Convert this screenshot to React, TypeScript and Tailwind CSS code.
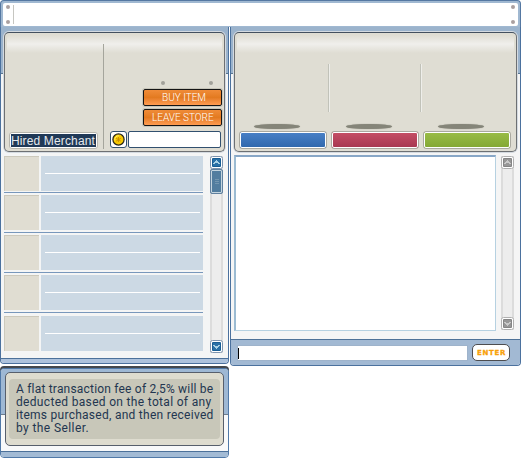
import React from 'react';

const rows = [
  { box: 'h-[35px] mt-0', line: 'mt-[17px]' },
  { box: 'h-[35px] mt-[2px]', line: 'mt-[17px]' },
  { box: 'h-[35px] mt-[2px]', line: 'mt-[17px]' },
  { box: 'h-[35px] mt-[2px]', line: 'mt-[17px]' },
  { box: 'h-[35px] mt-[3px]', line: 'mt-[17px]' },
];
const gaps = ['h-[1px]', 'h-[2px]', 'h-[2px]', 'h-[2px]', 'h-0'];

function Arrow({ down, gray }: { down?: boolean; gray?: boolean }) {
  return (
    <svg width="13" height="13" viewBox="0 0 13 13" className="block shrink-0">
      <rect x=".5" y=".5" width="12" height="12" rx="2" fill="#fff" stroke={gray ? '#b0b0b0' : '#7d94af'} />
      <rect x="2" y="2" width="9" height="9" rx="1" fill={gray ? '#858585' : '#175d94'} />
      <rect x="3" y="3" width="7" height="7" fill={gray ? '#979797' : '#2a70a6'} />
      <path shapeRendering="crispEdges" d={down ? 'M3 5h2v1h3V5h2v1H9v1H8v1H7v1H6V8H5V7H4V6H3z' : 'M3 8h2V7h3v1h2V7H9V6H8V5H7V4H6v1H5v1H4v1H3z'} fill={gray ? '#c9c9c9' : '#a8d0e4'} />
    </svg>
  );
}

function Shade() {
  return <div className="absolute inset-x-[2px] top-[2px] h-[18px] rounded bg-gradient-to-b from-[#dfddd3] via-[#f0efec] to-[#dfddd3]" />;
}

function Coin() {
  return (
    <div className="flex h-[17px] w-[17px] items-center justify-center rounded-[3px] border border-[#31506f] bg-white">
      <svg width="13" height="13" viewBox="0 0 13 13">
        <circle cx="6.5" cy="6.5" r="5.6" fill="#f6c800" stroke="#292719" strokeWidth="1.3" />
        <path d="M2.8 7.5a3.8 3.8 0 0 1 4.2-4.7" stroke="#fff06a" fill="none" />
        <path d="M6.5 4v5M4.2 5.3l4.6 2.8M8.8 5.3L4.2 8.1" stroke="#c88c00" strokeWidth=".9" />
      </svg>
    </div>
  );
}

function OrangeButton({ children, pad }: { children: React.ReactNode; pad: string }) {
  return (
    <button className={`flex h-[17px] w-[79px] items-center whitespace-nowrap rounded-[2px] border border-[#151515] bg-gradient-to-b from-[#f08c38] via-[#e37a20] to-[#ff9c51] font-['Roboto',sans-serif] text-[10px] font-light leading-[15px] text-white shadow-[0_0_0_1px_#c7c5b9] ${pad}`}>
      {children}
    </button>
  );
}

function Avatar({ color }: { color: string }) {
  return (
    <div className="flex flex-col">
      <div className="ml-[15px] h-[5px] w-[46px] rounded-[50%] bg-[#858579] shadow-[0_0_1px_#858579]" />
      <div className={`mt-[2px] h-[18px] w-[88px] rounded-[3px] border border-[#aaa9a0] ${color}`}>
        <div className="h-full w-full rounded-[2px] border border-white" />
      </div>
    </div>
  );
}

export default function App() {
  return (
    <div className="h-[460px] w-[521px] overflow-hidden bg-white font-['Liberation_Sans',sans-serif]">
      <header className="flex h-[27px] w-[521px] rounded-t-[4px] border-x border-t border-[#5578a2] bg-[#a0b8d1] px-[2px] pb-[1px] pt-[2px]">
        <div className="flex h-[23px] w-full justify-between rounded-[2px] bg-white px-[3px] py-[2px]">
          <div className="flex gap-[3px]">
            <div className="flex flex-col justify-between">
              <i className="h-[4px] w-[4px] rounded-full bg-[#aaa0a0]" />
              <i className="h-[4px] w-[4px] rounded-full bg-[#aaa0a0]" />
            </div>
            <i className="h-[19px] w-px bg-[#c6c6c1]" />
          </div>
          <div className="flex flex-col justify-between">
            <i className="h-[4px] w-[4px] rounded-full bg-[#aaa0a0]" />
            <i className="h-[4px] w-[4px] rounded-full bg-[#aaa0a0]" />
          </div>
        </div>
      </header>

      <div className="flex h-[340px] gap-[1px]">
        <section className="h-[337px] w-[229px] overflow-hidden rounded-b-[4px] border-x border-b border-[#4b719e] bg-[#f4f5f5]">
          <div className="h-[47px] border-b border-[#597590] bg-[#9bb3cc] px-[3px] pt-[5px]">
            <div className="relative flex h-[120px] w-[221px] rounded-[5px] border border-[#6d7073] border-t-[#43505f] bg-[#dfddd3] shadow-[0_0_0_1px_#d4dae0]">
              <Shade />
              <div className="relative mt-[11px] h-[105px] w-[99px] border-r border-[#a5a59c]">
                <div className="ml-[4px] mt-[88px] h-[17px] w-[89px] rounded-[3px] border border-[#b6b5ad] bg-white p-px">
                  <div className="h-[13px] overflow-hidden whitespace-nowrap bg-[#203957] text-[12px] leading-[14px] tracking-[.14px] text-[#e5e9ed]">Hired Merchant</div>
                </div>
              </div>
              <div className="relative flex flex-1 flex-col items-end pr-[3px] pt-[48px]">
                <div className="flex w-[63px] justify-between pl-[3px] pr-[8px]">
                  <i className="h-[4px] w-[4px] rounded-full bg-[#a2a19a]" /><i className="h-[4px] w-[4px] rounded-full bg-[#a2a19a]" />
                </div>
                <div className="-mr-px mt-[4px] flex flex-col gap-[3px]">
                  <OrangeButton pad="pl-[18px] tracking-[0px]">BUY ITEM</OrangeButton>
                  <OrangeButton pad="pl-[8px] tracking-[0px]">LEAVE STORE</OrangeButton>
                </div>
                <div className="mt-[5px] flex gap-px">
                  <Coin />
                  <div className="h-[17px] w-[93px] rounded-[2px] border border-[#31506f] bg-white" />
                </div>
              </div>
            </div>
          </div>
          <div className="flex h-[284px] pl-[3px] pt-[82px]">
            <div className="w-[199px]">
              {rows.map((row, i) => (
                <React.Fragment key={i}>
                  <div className={`flex gap-[2px] ${row.box}`}>
                    <div className="w-[35px] shrink-0 border-l border-t border-[#ccc9bc] bg-[#e0ddd2]" />
                    <div className="min-w-0 flex-1 bg-[#ccd9e4] pl-[4px]"><div className={`h-px w-[155px] bg-white ${row.line}`} /></div>
                  </div>
                  <div className={gaps[i]} />
                  {i < 4 && <div className="h-px bg-[#7897bb]" />}
                </React.Fragment>
              ))}
            </div>
            <div className="ml-[7px] flex h-[197px] w-[13px] flex-col border-x-2 border-[#dcdcdc] bg-[#ededed]">
              <div className="-mx-[2px]"><Arrow /></div>
              <div className="-mx-[2px] flex h-[25px] w-[13px] flex-col items-center justify-center gap-px rounded-[2px] border border-[#61819f] bg-[#527d9f] shadow-[inset_0_0_0_1px_#c5d5df]">
                <i className="h-px w-[4px] bg-[#7396b0]" /><i className="h-px w-[4px] bg-[#7396b0]" /><i className="h-px w-[4px] bg-[#7396b0]" />
              </div>
              <div className="-mx-[2px] mt-auto"><Arrow down /></div>
            </div>
          </div>
          <div className="h-[6px] border-t border-[#4c719a] bg-[#adc2dc]" />
        </section>

        <section className="h-[339px] w-[291px] overflow-hidden rounded-b-[4px] border-x border-b border-[#4b719e] bg-[#f5f5f5]">
          <div className="h-[47px] border-b border-[#597590] bg-[#9bb3cc] px-[3px] pt-[5px]">
            <div className="relative h-[120px] w-[283px] rounded-[5px] border border-[#6d7073] border-t-[#43505f] bg-[#dfddd3] shadow-[0_0_0_1px_#d4dae0]">
              <Shade />
              <div className="relative flex gap-[91px] pl-[93px] pt-[31px]">
                <i className="h-[48px] w-px bg-[#c1c2b9] shadow-[1px_0_0_#eeeeea]" />
                <i className="h-[48px] w-px bg-[#c1c2b9] shadow-[1px_0_0_#eeeeea]" />
              </div>
              <div className="relative mt-[12px] flex gap-[4px] pl-[4px]">
                <Avatar color="bg-gradient-to-b from-[#4a81c7] to-[#2f67ac]" />
                <Avatar color="bg-gradient-to-b from-[#c64f66] to-[#a63650]" />
                <Avatar color="bg-gradient-to-b from-[#9abd47] to-[#83a733]" />
              </div>
            </div>
          </div>
          <div className="flex h-[265px] pl-[3px] pt-[81px]">
            <div className="h-[176px] w-[262px] border border-[#b6d1e1] border-l-2 border-l-[#9cbbd2] border-t-2 border-t-[#88a7c7] bg-white" />
            <div className="ml-[5px] mt-px flex h-[174px] w-[13px] flex-col justify-between border-x-2 border-[#dcdcdc] bg-[#ededed]">
              <div className="-mx-[2px]"><Arrow gray /></div>
              <div className="-mx-[2px]"><Arrow down gray /></div>
            </div>
          </div>
          <div className="flex h-[27px] border-t border-[#4f7298] bg-[#a2b9d3] pl-[6px] pt-[5px]">
            <div className="h-[16px] w-[231px] border border-[#9eb3cb] bg-white py-[2px]"><i className="block h-[11px] w-px bg-black" /></div>
            <button className="-mt-px ml-[4px] flex h-[17px] w-[38px] items-center justify-center rounded-[5px] border border-[#4d4d50] bg-white pl-px font-['DejaVu_Sans',sans-serif] text-[7px] font-bold leading-[10px] tracking-[.7px] text-[#f8a008] [-webkit-text-stroke:0.3px_#f8a008]">ENTER</button>
          </div>
        </section>
      </div>

      <section className="relative mt-px h-[90px] w-[229px] overflow-hidden rounded-[4px] border border-[#5079a8] bg-[#f8f9fa] shadow-[0_-2px_0_#44484d]">
        <div className="h-[46px] border-b border-[#6e7e8e] bg-[#9eb8d4] px-[4px] pt-[3px]">
          <div className="relative h-[74px] w-[219px] rounded-[5px] border border-[#575f6c] bg-[#dedccf] px-[3px] pt-[6px]">
            <div className="h-[60px] w-[211px] rounded-[4px] bg-[#c8c7b9] pl-[7px] pt-[4px] font-['Roboto',sans-serif] text-[12px] leading-[13px] text-[#233650]">
              <p className="whitespace-nowrap tracking-[.2px]">A flat transaction fee of 2,5% will be</p>
              <p className="whitespace-nowrap tracking-[.32px]">deducted based on the total of any</p>
              <p className="whitespace-nowrap tracking-[.27px]">items purchased, and then received</p>
              <p className="whitespace-nowrap tracking-[.4px]">by the Seller.</p>
            </div>
          </div>
        </div>
        <div className="mt-[36px] h-[6px] border-t border-[#4c719a] bg-[#a3bbd5]" />
      </section>
    </div>
  );
}
